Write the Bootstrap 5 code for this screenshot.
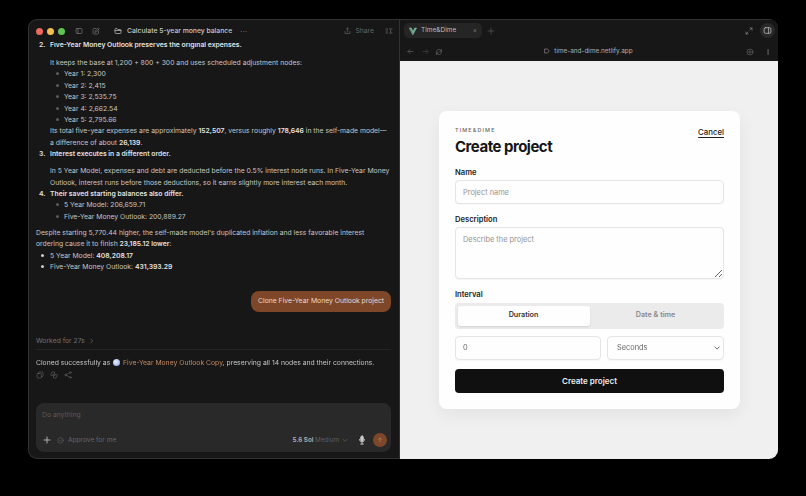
<!doctype html>
<html lang="en">
<head>
  <meta charset="UTF-8">
  <title>Time&amp;Dime</title>
  <meta name="viewport" content="width=device-width, initial-scale=1">
  <link rel="stylesheet" href="https://cdn.jsdelivr.net/npm/bootstrap@5.3.0/dist/css/bootstrap.min.css">
  <style>
    html, body { height: 100%; }
    body { background: #000; font-family: Inter, "Liberation Sans", sans-serif; padding: 19px 28px 37px; overflow: hidden; }
    svg { display: block; fill: none; stroke: currentColor; stroke-linecap: round; stroke-linejoin: round; flex: none; }

    .app-window { width: 750px; height: 440px; border-radius: 9px; overflow: hidden; background: #181818; box-shadow: inset 0 0 0 1px #333; opacity: .999; }

    /* left pane */
    .chat { width: 371px; flex: none; font-size: 6.8px; line-height: 11.4px; color: #c6c6c6; }
    .titlebar { height: 22px; padding: 0 6px 0 8px; margin-top: 1px; color: #777; flex: none; }
    .dot { width: 7px; height: 7px; border-radius: 50%; margin-right: 4px; flex: none; }
    .title { color: #c9c9c9; font-size: 6.8px; font-weight: 500; }
    .share { font-size: 6.8px; color: #666; }
    .msgs { height: 276px; overflow: hidden; padding: 0 0 0 8px; flex: none; }
    .msgs b { color: #e2e2e2; font-weight: 600; }
    .num { width: 14px; padding-left: 3px; flex: none; font-weight: 600; color: #e2e2e2; }
    .indent { padding-left: 14px; }
    .sub { padding-left: 14px; margin: 0; list-style: none; }
    .sub li { position: relative; }
    .sub li::before { content: ""; position: absolute; left: -8.5px; top: 4px; width: 3px; height: 3px; border-radius: 50%; background: #5c5c5c; }
    .bul { padding-left: 14px; margin: 0; list-style: none; }
    .bul li { position: relative; }
    .bul li::before { content: ""; position: absolute; left: -9px; top: 4px; width: 3px; height: 3px; border-radius: 50%; background: #ccc; }
    .bubble { background: #7f482a; color: #e8dcd3; border-radius: 8px; height: 21px; padding: 0 7px; margin: 0 8px 0 0; }
    .worked { color: #727272; border-bottom: 1px solid #262626; height: 15px; margin: 17px 8px 0 8px; flex: none; }
    .clone { padding: 7px 8px 0; white-space: nowrap; }
    .clone a { color: #c58a62; text-decoration: none; }
    .orb { width: 7px; height: 7px; border-radius: 50%; background: radial-gradient(circle at 40% 40%, #eef3ff, #7f9ce0); display: inline-block; vertical-align: -0.5px; margin: 0 1px; }
    .acts { padding: 3px 8px 0 8px; color: #666; gap: 6px; }
    .composer { background: #2a2a2a; border-radius: 8px; height: 49px; margin: 24px 8px 0; padding: 6px 4px 5px 6px; color: #666; }
    .send { width: 14px; height: 14px; border-radius: 50%; background: #7f482a; color: #b98a6c; }
    .hint { color: #5a5a5a; }
    .model { color: #b5b5b5; font-weight: 600; font-size: 6.3px; }
    .model span { color: #5f5f5f; font-weight: 400; }

    /* right pane */
    .browser { flex: 1 1 auto; border-left: 1px solid #333; min-width: 0; }
    .tabs { height: 20px; padding: 1px 3px 0 4px; color: #777; background: #181818; margin-top: 1px; flex: none; }
    .tab { width: 78px; height: 15px; border-radius: 5px; background: #262626; color: #bdbdbd; font-size: 6.5px; padding: 0 5px 0 5px; }
    .urlbar { height: 21px; padding: 2px 7px 0 7px; color: #666; background: #181818; font-size: 6.4px; flex: none; }
    .urlbar .url { color: #b0b0b0; }
    .page { background: #f1f1f1; flex: 1 1 auto; padding-top: 50px; }

    .form-card { width: 301px; height: 298px; background: #fff; border: 0; border-radius: 8px; padding: 16px; box-shadow: 0 6px 18px rgba(0,0,0,.06); margin-left: 39px; color: #171717; }
    .brand { font-size: 5.4px; letter-spacing: 1.15px; color: #666; line-height: 7px; font-weight: 500; }
    .form-card h1 { font-size: 15px; letter-spacing: -.5px; line-height: 20px; margin: 3px 0 0; font-weight: 700; }
    .cancel { color: #222; font-size: 7.8px; font-weight: 500; text-decoration: underline; text-underline-offset: 1.5px; }
    .lbl { font-size: 7.6px; font-weight: 600; line-height: 10px; margin: 0 0 2px; display: block; color: #1d1d1d; }
    .form-control, .form-select { font-size: 7.4px; border: 1px solid #e6e6e6; border-radius: 4px; padding: 0 7px; height: 24.5px; color: #666; min-height: 0; box-shadow: 0 1px 1px rgba(0,0,0,.03); }
    .form-control::placeholder { color: #949494; }
    textarea.form-control { height: 53px; padding-top: 6px; min-height: 0; }
    .form-select { background-size: 8px 6px; background-position: right 2px center; padding-left: 9px; }
    .seg { background: #ececec; border-radius: 4px; height: 26px; padding: 2.5px; }
    .seg div { height: 100%; border-radius: 3px; font-size: 7.2px; font-weight: 600; color: #8a8a8a; }
    .seg .on { background: #fff; color: #333; box-shadow: 0 1px 2px rgba(0,0,0,.1); }
    .go { height: 25px; background: #111; border: 0; border-radius: 4px; color: #eee; font-size: 8px; font-weight: 600; width: 100%; padding: 0; }
    .go:hover { background: #111; color: #eee; }
  </style>
</head>
<body>
<div class="app-window d-flex">

  <!-- Chat side -->
  <div class="chat d-flex flex-column">
    <div class="titlebar d-flex align-items-center">
      <span class="dot" style="background:#ed6a5e"></span>
      <span class="dot" style="background:#f4bf4f"></span>
      <span class="dot" style="background:#61c554"></span>
      <svg width="8" height="8" viewBox="0 0 16 16" stroke-width="1.4" style="margin-left:6px"><rect x="2" y="3" width="12" height="10" rx="2"/><path d="M6 3v10"/></svg>
      <svg width="8" height="8" viewBox="0 0 16 16" stroke-width="1.4" style="margin-left:9px"><path d="M8 3H4a2 2 0 0 0-2 2v7a2 2 0 0 0 2 2h7a2 2 0 0 0 2-2V8"/><path d="M6 10l1-3 6-5 1.500 1.500-5.500 6z"/></svg>
      <svg width="8" height="8" viewBox="0 0 16 16" stroke-width="1.5" style="margin-left:14px;color:#bbb"><path d="M2 4.500a1.500 1.500 0 0 1 1.500-1.500H6l1.500 2h5A1.500 1.500 0 0 1 14 6.500v5a1.500 1.500 0 0 1-1.500 1.500h-9A1.500 1.500 0 0 1 2 11.500z"/><path d="M2 7h12"/></svg>
      <span class="title" style="margin-left:5px">Calculate 5-year money balance</span>
      <span class="ms-2" style="letter-spacing:.5px;line-height:7px">···</span>
      <span class="share ms-auto d-flex align-items-center gap-1">
        <svg width="7" height="8" viewBox="0 0 14 16" stroke-width="1.3"><path d="M7 10V2M4.500 4.500 7 2l2.500 2.500M2 9v4h10V9"/></svg>Share
      </span>
      <svg width="8" height="8" viewBox="0 0 16 16" stroke-width="1.4" style="margin-left:11px"><path d="M2 4h3M2 8h3M2 12h3M9 4h5M9 12h5M11 7v2"/></svg>
    </div>

    <div class="msgs">
      <div class="d-flex" style="margin-top:-3px"><span class="num">2.</span><b>Five-Year Money Outlook preserves the original expenses.</b></div>
      <div class="indent" style="margin-top:6.600px">It keeps the base at 1,200 + 800 + 300 and uses scheduled adjustment nodes:</div>
      <div class="indent">
        <ul class="sub">
          <li>Year 1: 2,300</li>
          <li>Year 2: 2,415</li>
          <li>Year 3: 2,535.75</li>
          <li>Year 4: 2,662.54</li>
          <li>Year 5: 2,795.66</li>
        </ul>
        Its total five-year expenses are approximately <b>152,507</b>, versus roughly <b>178,646</b> in the self-made model—<br>a difference of about <b>26,139</b>.
      </div>
      <div class="d-flex"><span class="num">3.</span><b>Interest executes in a different order.</b></div>
      <div class="indent" style="margin-top:5.600px">In 5 Year Model, expenses and debt are deducted before the 0.5% interest node runs. In Five-Year Money<br>Outlook, interest runs before those deductions, so it earns slightly more interest each month.</div>
      <div class="d-flex"><span class="num">4.</span><b>Their saved starting balances also differ.</b></div>
      <div class="indent">
        <ul class="sub">
          <li>5 Year Model: 206,659.71</li>
          <li>Five-Year Money Outlook: 200,889.27</li>
        </ul>
      </div>
      <div style="margin-top:4.600px;padding-right:8px">Despite starting 5,770.44 higher, the self-made model's duplicated inflation and less favorable interest<br>ordering cause it to finish <b>23,185.12 lower</b>:</div>
      <ul class="bul" style="margin-top:0">
        <li>5 Year Model: <b>408,208.17</b></li>
        <li>Five-Year Money Outlook: <b>431,393.29</b></li>
      </ul>
      <div class="d-flex justify-content-end" style="margin-top:18px">
        <div class="bubble d-flex align-items-center">Clone Five-Year Money Outlook project</div>
      </div>
    </div>

    <div class="worked d-flex align-items-start">Worked for 27s
      <svg width="5" height="6" viewBox="0 0 8 10" stroke-width="1" style="margin-top:3px;margin-left:4px"><path d="M2.500 1.500 6 5 2.500 8.500"/></svg>
    </div>
    <div class="clone">Cloned successfully as <i class="orb"></i> <a href="#">Five-Year Money Outlook Copy</a>, preserving all 14 nodes and their connections.</div>
    <div class="acts d-flex">
      <svg width="8" height="8" viewBox="0 0 16 16" stroke-width="1.2"><rect x="2" y="5" width="9" height="9" rx="2"/><path d="M5 5V3.500A1.500 1.500 0 0 1 6.500 2H12.500A1.500 1.500 0 0 1 14 3.500V9.500A1.500 1.500 0 0 1 12.500 11H11"/></svg>
      <svg width="8" height="8" viewBox="0 0 16 16" stroke-width="1.2"><path d="M2 6l2-4h5v5H6l-1 2H3zM14 10l-2 4H7V9h3l1-2h2z"/></svg>
      <svg width="8" height="8" viewBox="0 0 16 16" stroke-width="1.2"><circle cx="3" cy="8" r="1.500"/><circle cx="13" cy="3" r="1.500"/><circle cx="13" cy="13" r="1.500"/><path d="M4.500 7.500 11.500 3.500M4.500 8.500 11.500 12.500"/></svg>
    </div>

    <div class="composer d-flex flex-column justify-content-between">
      <div class="hint">Do anything</div>
      <div class="d-flex align-items-center">
        <svg width="8" height="8" viewBox="0 0 16 16" stroke-width="1.8" style="color:#bbb;margin-left:1px"><path d="M8 2v12M2 8h12"/></svg>
        <svg width="7" height="7" viewBox="0 0 14 14" stroke-width="1.100" style="margin-left:6px"><circle cx="7" cy="7" r="5.500"/><path d="M5 7l1.500 1.500L9.500 5.500"/></svg>
        <span style="margin-left:4px;font-size:6.6px">Approve for me</span>
        <span class="model ms-auto">5.6 Sol <span>Medium</span></span>
        <svg width="6" height="5" viewBox="0 0 10 8" stroke-width="1.100" style="margin-left:3px"><path d="M1.500 2 5 5.500 8.500 2"/></svg>
        <svg width="8" height="10" viewBox="0 0 12 16" stroke-width="1.500" style="margin-left:10px;color:#ccc"><rect x="4" y="1.500" width="4" height="8" rx="2" fill="currentColor"/><path d="M2 7a4 4 0 0 0 8 0M6 11v3M4 14.500h4"/></svg>
        <span class="send d-flex align-items-center justify-content-center" style="margin-left:7px">
          <svg width="6" height="6" viewBox="0 0 12 12" stroke-width="1.200"><path d="M6 10V2M3 5l3-3 3 3"/></svg>
        </span>
      </div>
    </div>
  </div>

  <!-- Browser side -->
  <div class="browser d-flex flex-column">
    <div class="tabs d-flex align-items-center">
      <div class="tab d-flex align-items-center">
        <svg width="8" height="8" viewBox="0 0 16 16" stroke="none" style="fill:#4fb98a"><path d="M1 2h3.500L8 9l3.500-7H15L8 15z"/></svg>
        <span style="margin-left:4px">Time&amp;Dime</span>
        <span class="ms-auto" style="color:#777">×</span>
      </div>
      <svg width="8" height="8" viewBox="0 0 16 16" stroke-width="1.300" style="color:#5c5c5c;margin-left:5px"><path d="M8 2v12M2 8h12"/></svg>
      <svg class="ms-auto" width="8" height="8" viewBox="0 0 16 16" stroke-width="1.400" style="color:#888"><path d="M10 2h4v4M14 2 10 6M6 14H2v-4M2 14l4-4"/></svg>
      <span class="d-flex align-items-center justify-content-center rounded-circle" style="width:15px;height:15px;background:#2a2a2a;margin-left:7px;color:#bbb">
        <svg width="9" height="9" viewBox="0 0 16 16" stroke-width="1.400"><rect x="2" y="3" width="12" height="10" rx="2.500"/><path d="M10 3v10"/></svg>
      </span>
    </div>
    <div class="urlbar d-flex align-items-center">
      <svg width="7" height="7" viewBox="0 0 14 14" stroke-width="1.300"><path d="M12 7H2M6 3 2 7l4 4"/></svg>
      <svg width="7" height="7" viewBox="0 0 14 14" stroke-width="1.300" style="margin-left:8px;color:#444"><path d="M2 7h10M8 3l4 4-4 4"/></svg>
      <svg width="8" height="8" viewBox="0 0 16 16" stroke-width="1.400" style="margin-left:6px"><path d="M3 7a5 5 0 0 1 9-2l1 1.500M13 9a5 5 0 0 1-9 2L3 9.500M13 3v3.500H9.500M3 13V9.500h3.500"/></svg>
      <div class="url d-flex align-items-center justify-content-center flex-grow-1" style="padding-right:12px">
        <svg class="me-1" width="6" height="6" viewBox="0 0 12 12" stroke-width="1"><path d="M2 2h5l3.500 4L7 10H2z"/></svg>time-and-dime.netlify.app
      </div>
      <svg width="8" height="8" viewBox="0 0 16 16" stroke-width="1.300"><circle cx="8" cy="8" r="6"/><path d="M8 5v6M5 8h6"/></svg>
      <svg width="6" height="8" viewBox="0 0 8 16" stroke="none" style="margin-left:11px;fill:currentColor"><circle cx="4" cy="4" r="1.100"/><circle cx="4" cy="8" r="1.100"/><circle cx="4" cy="12" r="1.100"/></svg>
    </div>

    <div class="page">
      <div class="form-card card">
        <div class="d-flex justify-content-between align-items-start">
          <div>
            <div class="brand">TIME&amp;DIME</div>
            <h1>Create project</h1>
          </div>
          <a href="#" class="cancel">Cancel</a>
        </div>
        <label class="lbl" style="margin-top:11px">Name</label>
        <input class="form-control" placeholder="Project name">
        <label class="lbl" style="margin-top:11px">Description</label>
        <textarea class="form-control" placeholder="Describe the project"></textarea>
        <label class="lbl" style="margin-top:11px;margin-bottom:3px">Interval</label>
        <div class="seg d-flex">
          <div class="on d-flex align-items-center justify-content-center w-50">Duration</div>
          <div class="d-flex align-items-center justify-content-center w-50">Date &amp; time</div>
        </div>
        <div class="d-flex" style="margin-top:7px;gap:6px">
          <input class="form-control" value="0" style="width:146px">
          <select class="form-select flex-grow-1" style="width:auto"><option>Seconds</option></select>
        </div>
        <button class="btn go" style="margin-top:8.500px">Create project</button>
      </div>
    </div>
  </div>
</div>
<script src="https://cdn.jsdelivr.net/npm/bootstrap@5.3.0/dist/js/bootstrap.bundle.min.js"></script>
</body>
</html>
